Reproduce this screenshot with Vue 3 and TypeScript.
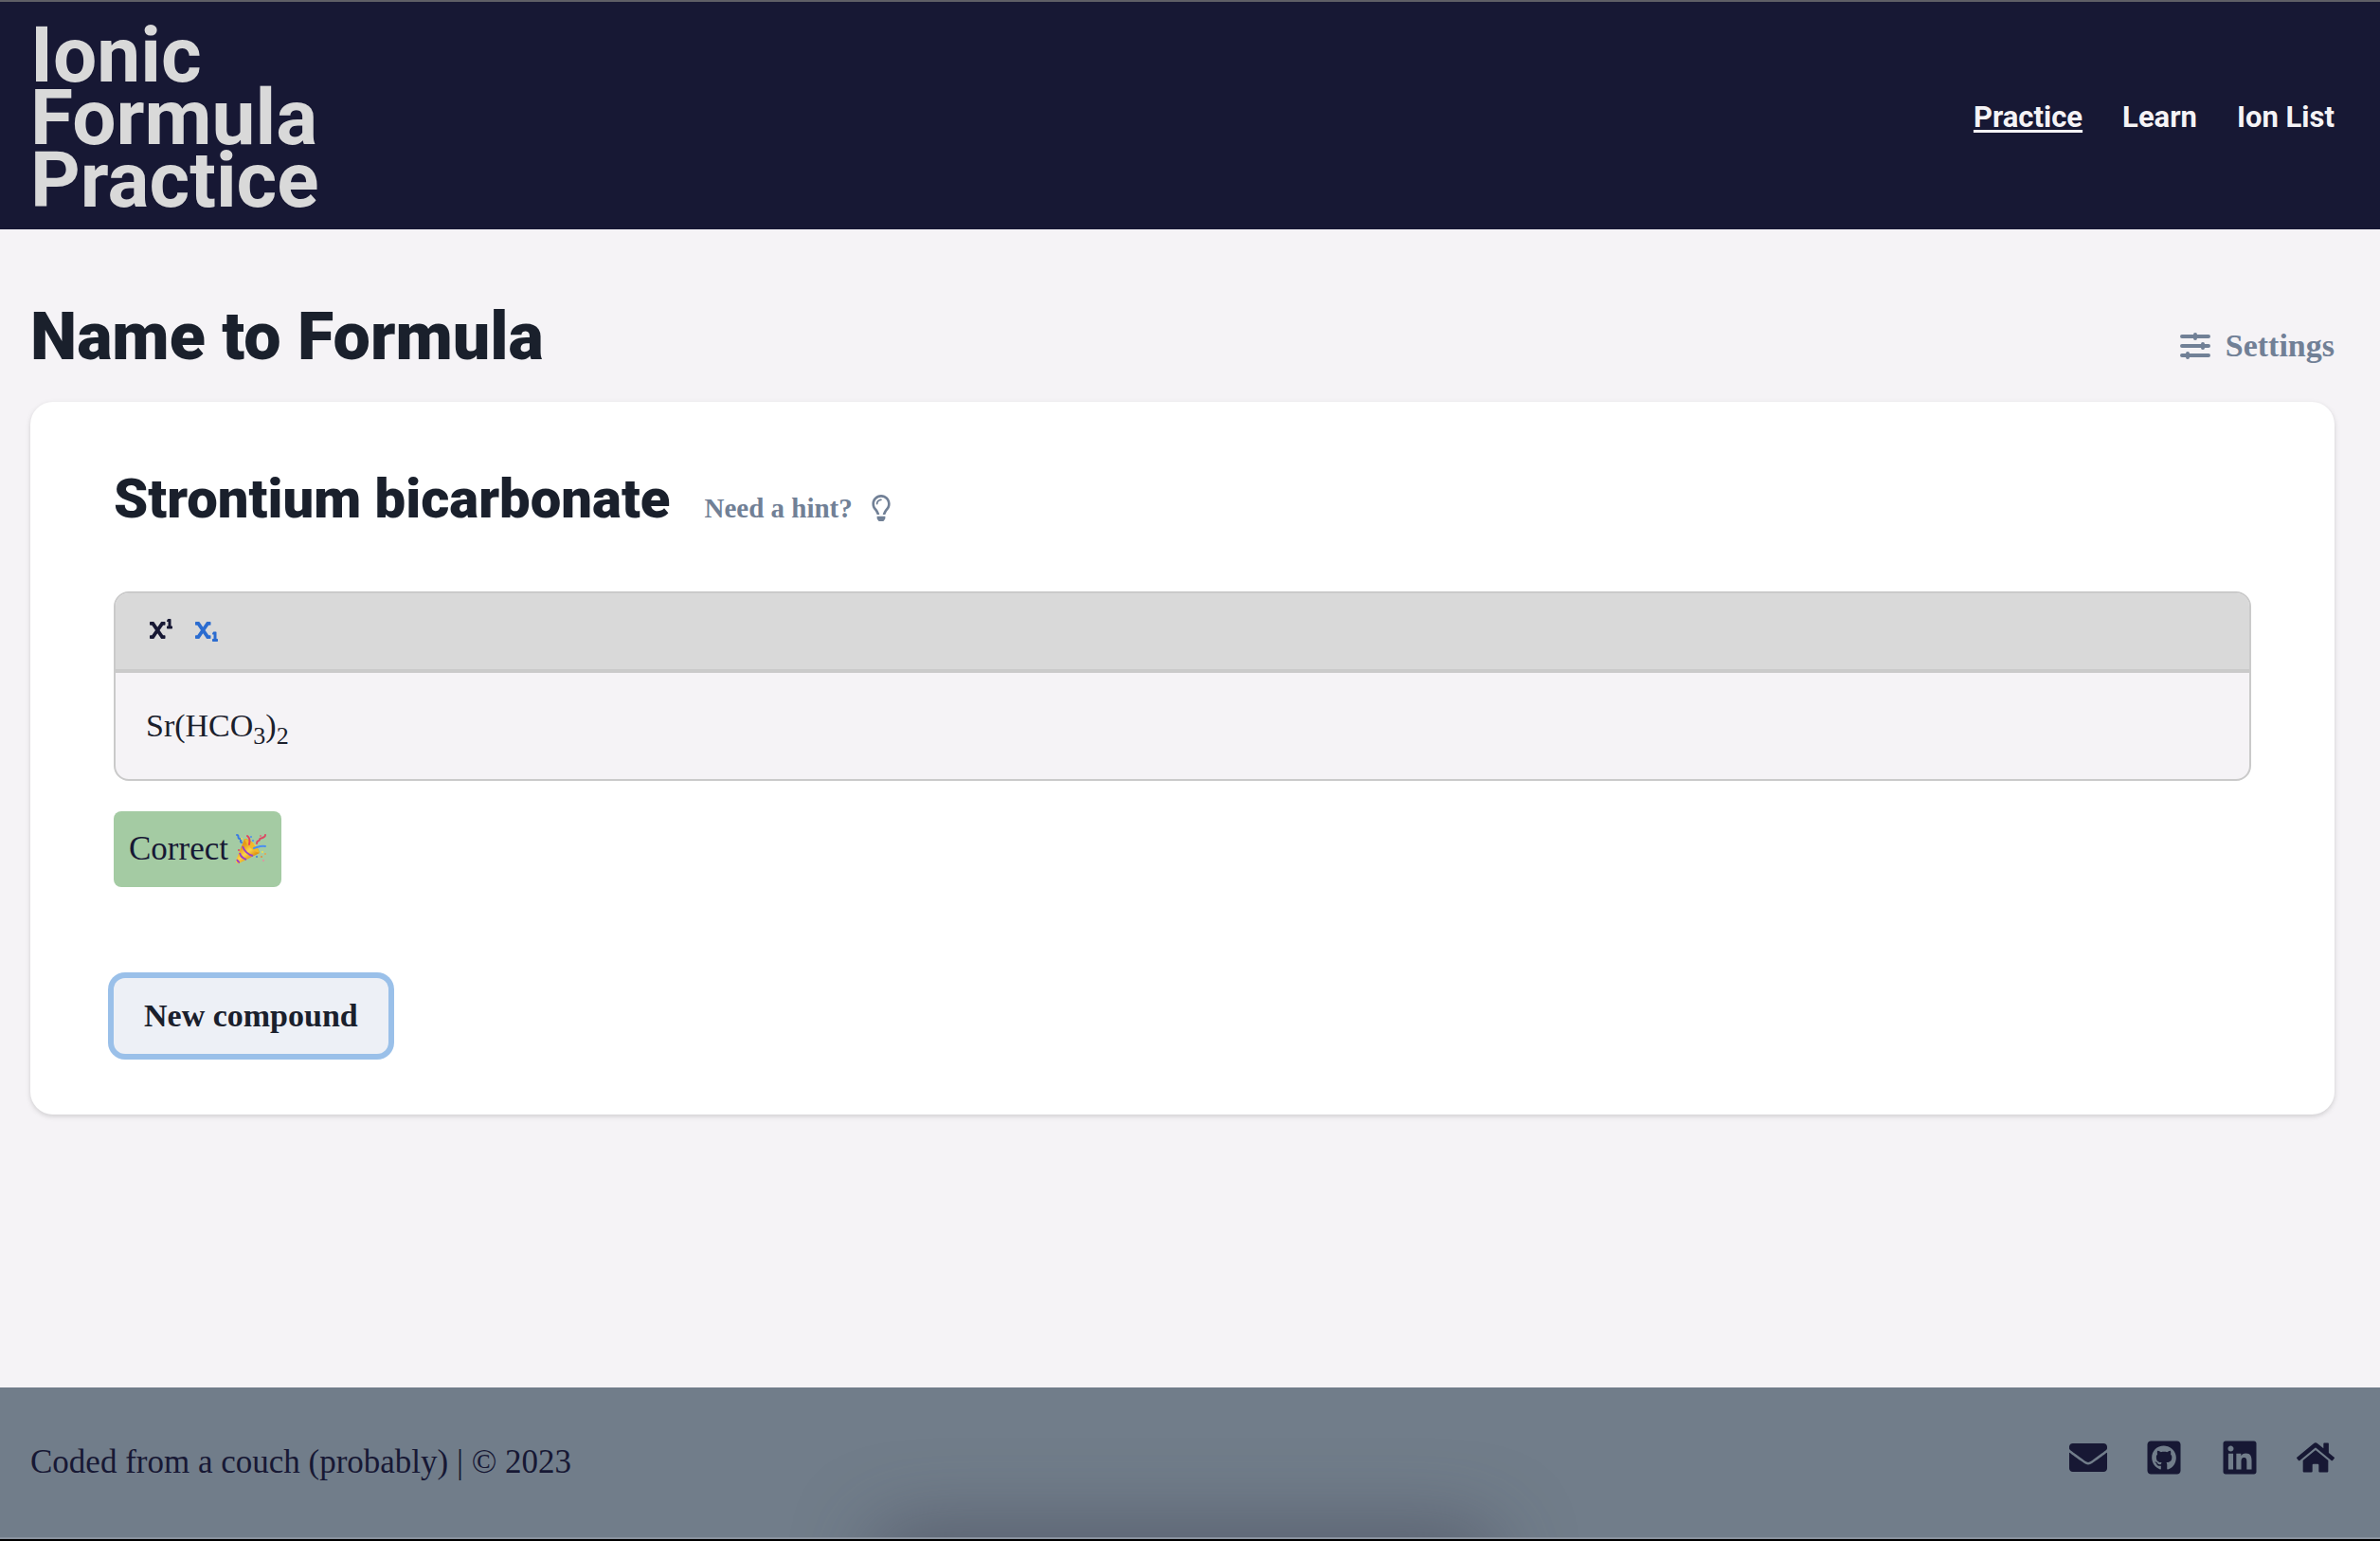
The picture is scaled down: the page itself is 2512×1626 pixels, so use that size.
<script setup lang="ts">
import { ref } from 'vue'

interface NavLink {
  label: string
  href: string
}

interface SocialLink {
  label: string
  href: string
  viewBox: string
  path: string
}

type Script = 'super' | 'sub'

const navLinks: NavLink[] = [
  { label: 'Practice', href: '#practice' },
  { label: 'Learn', href: '#learn' },
  { label: 'Ion List', href: '#ions' },
]
const currentPage = ref('Practice')
const activeScript = ref<Script>('sub')

const socialLinks: SocialLink[] = [
  {
    label: 'Email',
    href: '#email',
    viewBox: '0 0 512 512',
    path: 'M502.3 190.8c3.9-3.1 9.7-.2 9.7 4.7V400c0 26.5-21.5 48-48 48H48c-26.5 0-48-21.5-48-48V195.6c0-5 5.7-7.8 9.7-4.7 22.4 17.4 52.1 39.5 154.1 113.6 21.1 15.4 56.7 47.8 92.2 47.6 35.7.3 72-32.8 92.3-47.6 102-74.1 131.6-96.3 154-113.7zM256 320c23.2.4 56.6-29.2 73.4-41.4 132.7-96.3 142.8-104.7 173.4-128.7 5.8-4.5 9.2-11.5 9.2-18.9v-19c0-26.5-21.5-48-48-48H48c-26.5 0-48 21.5-48 48v19c0 7.4 3.4 14.3 9.2 18.9 30.6 23.9 40.7 32.4 173.4 128.7 16.8 12.2 50.2 41.8 73.4 41.4z',
  },
  {
    label: 'GitHub',
    href: '#github',
    viewBox: '0 0 448 512',
    path: 'M400 32H48C21.5 32 0 53.5 0 80v352c0 26.5 21.5 48 48 48h352c26.5 0 48-21.5 48-48V80c0-26.5-21.5-48-48-48zM277.3 415.7c-8.4 1.5-11.5-3.7-11.5-8 0-5.4.2-33 .2-55.3 0-15.6-5.2-25.5-11.3-30.7 37-4.1 76-9.2 76-73.1 0-18.2-6.5-27.3-17.1-39 1.7-4.3 7.4-22-1.7-45-13.9-4.3-45.7 17.9-45.7 17.9-13.2-3.7-27.5-5.6-41.6-5.6-14.1 0-28.4 1.9-41.6 5.6 0 0-31.8-22.2-45.7-17.9-9.1 22.9-3.5 40.6-1.7 45-10.6 11.7-15.6 20.8-15.6 39 0 63.6 37.3 69 74.3 73.1-4.8 4.3-9.1 11.7-10.6 22.3-9.5 4.3-33.8 11.7-48.3-13.9-9.1-15.8-25.5-17.1-25.5-17.1-16.2-.2-1.1 10.2-1.1 10.2 10.8 5 18.4 24.2 18.4 24.2 9.7 29.7 56.1 19.7 56.1 19.7 0 13.9.2 36.5.2 40.6 0 4.3-3 9.5-11.5 8-66-22.1-112.2-84.9-112.2-158.3 0-91.8 70.2-161.5 162-161.5S388 165.6 388 257.4c.1 73.4-44.7 136.3-110.7 158.3z',
  },
  {
    label: 'LinkedIn',
    href: '#linkedin',
    viewBox: '0 0 448 512',
    path: 'M416 32H31.9C14.3 32 0 46.5 0 64.3v383.4C0 465.5 14.3 480 31.9 480H416c17.6 0 32-14.5 32-32.3V64.3c0-17.8-14.4-32.3-32-32.3zM135.4 416H69V202.2h66.5V416zm-33.2-243c-21.3 0-38.5-17.3-38.5-38.5S80.9 96 102.2 96c21.2 0 38.5 17.3 38.5 38.5 0 21.3-17.2 38.5-38.5 38.5zm282.1 243h-66.4V312c0-24.8-.5-56.7-34.5-56.7-34.6 0-39.9 27-39.9 54.9V416h-66.4V202.2h63.7v29.2h.9c8.9-16.8 30.6-34.5 62.9-34.5 67.2 0 79.7 44.3 79.7 101.9V416z',
  },
  {
    label: 'Home',
    href: '#home',
    viewBox: '0 0 576 512',
    path: 'M280.37 148.26L96 300.11V464a16 16 0 0 0 16 16l112.06-.29a16 16 0 0 0 15.92-16V368a16 16 0 0 1 16-16h64a16 16 0 0 1 16 16v95.64a16 16 0 0 0 16 16.05L464 480a16 16 0 0 0 16-16V300L295.67 148.26a12.19 12.19 0 0 0-15.3 0zM571.6 251.47L488 182.56V44.05a12 12 0 0 0-12-12h-56a12 12 0 0 0-12 12v72.61L318.47 43a48 48 0 0 0-61 0L4.34 251.47a12 12 0 0 0-1.6 16.9l25.5 31A12 12 0 0 0 45.15 301l235.22-193.74a12.19 12.19 0 0 1 15.3 0L530.9 301a12 12 0 0 0 16.9-1.6l25.5-31a12 12 0 0 0-1.7-16.93z',
  },
]
</script>

<template>
  <div class="page">
    <header class="header">
      <a class="brand" href="#home">Ionic<br />Formula<br />Practice</a>
      <nav class="nav">
        <a
          v-for="link in navLinks"
          :key="link.label"
          :href="link.href"
          :class="{ current: link.label === currentPage }"
          @click="currentPage = link.label"
        >{{ link.label }}</a>
      </nav>
    </header>

    <main class="main">
      <div class="title-row">
        <h1>Name to Formula</h1>
        <button type="button" class="plain settings">
          <svg width="32" height="28" viewBox="0 0 32 28" fill="none" stroke="currentColor" stroke-width="4" stroke-linecap="round" aria-hidden="true">
            <path d="M2 4h28M2 14h28M2 24h28M16 2v4M24 12v4M8 22v4" />
          </svg>
          <span>Settings</span>
        </button>
      </div>

      <section class="card">
        <div class="question">
          <h2 id="compound">Strontium bicarbonate</h2>
          <button type="button" class="plain hint">
            <span>Need a hint?</span>
            <svg width="20" height="28" viewBox="0 0 352 512" fill="currentColor" aria-hidden="true">
              <path d="M176 80c-52.94 0-96 43.06-96 96 0 8.84 7.16 16 16 16s16-7.16 16-16c0-35.3 28.72-64 64-64 8.84 0 16-7.16 16-16s-7.16-16-16-16zM96.06 459.17c0 3.15.93 6.22 2.68 8.84l24.51 36.84c2.97 4.46 7.97 7.14 13.32 7.14h78.85c5.36 0 10.36-2.68 13.32-7.14l24.51-36.84c1.74-2.62 2.67-5.7 2.68-8.84l.05-43.18H96.02l.04 43.18zM176 0C73.72 0 0 82.97 0 176c0 44.37 16.45 84.85 43.56 115.78 16.64 18.99 42.74 58.8 52.42 92.16v.06h48v-.12c-.01-4.77-.72-9.51-2.15-14.07-5.59-17.81-22.82-64.71-62.17-109.17-20.54-23.43-31.52-53.15-31.61-84.14-.2-73.64 59.67-128 127.95-128 70.58 0 128 57.42 128 128 0 30.97-11.24 60.85-31.65 84.14-39.11 44.61-56.42 91.47-62.1 109.46a47.507 47.507 0 0 0-2.22 14.3v.1h48v-.05c9.68-33.37 35.78-73.18 52.42-92.16C335.55 260.85 352 220.37 352 176 352 78.8 273.2 0 176 0z" />
            </svg>
          </button>
        </div>

        <div class="editor">
          <div class="toolbar">
            <button type="button" aria-label="Superscript" :class="{ active: activeScript === 'super' }" @click="activeScript = 'super'">
              <svg width="24" height="24" viewBox="0 0 512 512" fill="currentColor" aria-hidden="true">
                <path d="M496 160h-16V16a16 16 0 0 0-16-16h-48a16 16 0 0 0-14.29 8.83l-16 32A16 16 0 0 0 400 64h16v96h-16a16 16 0 0 0-16 16v32a16 16 0 0 0 16 16h96a16 16 0 0 0 16-16v-32a16 16 0 0 0-16-16zM336 64h-67a16 16 0 0 0-13.14 6.87l-79.9 115-79.9-115A16 16 0 0 0 83 64H16A16 16 0 0 0 0 80v48a16 16 0 0 0 16 16h33.48l77.81 112-77.81 112H16a16 16 0 0 0-16 16v48a16 16 0 0 0 16 16h67a16 16 0 0 0 13.14-6.87l79.9-115 79.9 115A16 16 0 0 0 269 448h67a16 16 0 0 0 16-16v-48a16 16 0 0 0-16-16h-33.48l-77.81-112 77.81-112H336a16 16 0 0 0 16-16V80a16 16 0 0 0-16-16z" />
              </svg>
            </button>
            <button type="button" aria-label="Subscript" :class="{ active: activeScript === 'sub' }" @click="activeScript = 'sub'">
              <svg width="24" height="24" viewBox="0 0 512 512" fill="currentColor" aria-hidden="true">
                <path d="M496 448h-16V304a16 16 0 0 0-16-16h-48a16 16 0 0 0-14.29 8.83l-16 32A16 16 0 0 0 400 352h16v96h-16a16 16 0 0 0-16 16v32a16 16 0 0 0 16 16h96a16 16 0 0 0 16-16v-32a16 16 0 0 0-16-16zM336 64h-67a16 16 0 0 0-13.14 6.87l-79.9 115-79.9-115A16 16 0 0 0 83 64H16A16 16 0 0 0 0 80v48a16 16 0 0 0 16 16h33.48l77.81 112-77.81 112H16a16 16 0 0 0-16 16v48a16 16 0 0 0 16 16h67a16 16 0 0 0 13.14-6.87l79.9-115 79.9 115A16 16 0 0 0 269 448h67a16 16 0 0 0 16-16v-48a16 16 0 0 0-16-16h-33.48l-77.81-112 77.81-112H336a16 16 0 0 0 16-16V80a16 16 0 0 0-16-16z" />
              </svg>
            </button>
          </div>
          <div class="answer" role="textbox" contenteditable="true" spellcheck="false" aria-labelledby="compound">Sr(HCO<sub>3</sub>)<sub>2</sub></div>
        </div>

        <p class="result" role="status">
          <span>Correct</span>
          <svg width="32" height="32" viewBox="0 0 32 32" fill="none" stroke-linecap="round" aria-hidden="true">
            <defs>
              <linearGradient id="cone" x1="6" y1="14" x2="16" y2="26" gradientUnits="userSpaceOnUse">
                <stop offset="0" stop-color="#e79a17" />
                <stop offset="0.5" stop-color="#fbd54a" />
                <stop offset="1" stop-color="#e0900f" />
              </linearGradient>
            </defs>
            <path d="M9 5C14 4 24 13 25 20L3 31C1 32 0 30 0 28Z" fill="url(#cone)" />
            <path d="M7 13c2 5 6 9 11 10M4 20c1 4 4 6 7 7M1 27c1 2 2 3 3 3" stroke="#9a3fc9" stroke-width="2" stroke-linecap="butt" />
            <path d="M9 5c6 1 13 8 16 15-6-1-14-8-16-15Z" fill="#f0b92c" />
            <path d="M14 11c1-4 1-7-2-9" stroke="#e5405e" stroke-width="2" />
            <path d="M19 15c4-1 7-3 12-2" stroke="#4b8ff0" stroke-width="2" />
            <path d="M1 1c3 0 0 4 3 4s-1 3 2 4" stroke="#3a7be0" stroke-width="2" />
            <path d="M31 1c0 3-2 2-3 3s-3 0-3 2-3 0-3 4" stroke="#dd4763" stroke-width="2" />
            <g>
              <circle cx="16" cy="3" r="1" fill="#4b8ff0" />
              <circle cx="6" cy="5" r="1" fill="#f5e547" />
              <circle cx="3" cy="17" r="1" fill="#dd4763" />
              <circle cx="18" cy="7" r="1" fill="#4b8ff0" />
              <circle cx="26" cy="2" r="1" fill="#dd6a7c" />
              <circle cx="22" cy="24" r="1" fill="#3a7be0" />
              <circle cx="28" cy="19" r="1" fill="#f5e547" />
              <circle cx="31" cy="21" r="1" fill="#eba24a" />
              <circle cx="27" cy="24" r="1" fill="#e58b3a" />
              <circle cx="29" cy="28" r="1" fill="#e98ba0" />
            </g>
          </svg>
        </p>

        <button type="button" class="next">New compound</button>
      </section>
    </main>

    <footer class="footer">
      <p>Coded from a couch (probably) | © 2023</p>
      <ul>
        <li v-for="link in socialLinks" :key="link.label">
          <a :href="link.href" :aria-label="link.label">
            <svg width="40" height="40" :viewBox="link.viewBox" fill="currentColor" aria-hidden="true">
              <path :d="link.path" />
            </svg>
          </a>
        </li>
      </ul>
    </footer>
  </div>
</template>

<style>
body {
  margin: 0;
  background: #f5f3f6;
}
</style>

<style scoped>
.page {
  box-sizing: border-box;
  display: flex;
  flex-direction: column;
  min-height: 100vh;
  border-top: 2px solid #5f5f66;
  border-bottom: 2px solid #000000;
  background: #f5f3f6;
  color: #1a202c;
  font-family: 'Liberation Serif', 'Times New Roman', serif;
  font-size: 35px;
  line-height: 48px;
}

.header {
  display: flex;
  align-items: center;
  justify-content: space-between;
  padding: 23px 48px 19px 32px;
  background: #171834;
  font-family: Roboto, sans-serif;
  font-weight: 700;
}

.brand {
  color: #d9d9d9;
  font-size: 82px;
  line-height: 66px;
  text-decoration: none;
}

.nav {
  display: flex;
  gap: 42px;
  font-size: 31px;
}

.nav a {
  color: #f5f3f6;
  text-decoration: none;
}

.nav a.current {
  text-decoration: underline;
  text-decoration-thickness: 3px;
  text-underline-offset: 3px;
  text-decoration-skip-ink: none;
}

.main {
  flex: 1;
  padding: 66px 48px 64px 32px;
}

.title-row {
  display: flex;
  align-items: baseline;
  justify-content: space-between;
  margin-bottom: 22px;
}

h1,
h2 {
  margin: 0;
  font-family: Roboto, sans-serif;
  font-weight: 900;
}

h1 {
  font-size: 70px;
  line-height: 94px;
}

h2 {
  font-size: 58px;
  line-height: 72px;
}

.plain {
  display: flex;
  align-items: center;
  padding: 0;
  border: 0;
  background: none;
  color: #718096;
  font: inherit;
  font-weight: 700;
}

.settings {
  gap: 16px;
  font-size: 34px;
}

.hint {
  gap: 20px;
  font-size: 29px;
}

.card {
  padding: 66px 88px 64px;
  border-radius: 24px;
  background: #ffffff;
  box-shadow: 0 2px 6px rgba(0, 0, 0, 0.1), 0 2px 4px rgba(0, 0, 0, 0.06);
}

.question {
  display: flex;
  align-items: baseline;
  gap: 36px;
  margin-bottom: 62px;
}

.editor {
  overflow: hidden;
  border: 2px solid #cacaca;
  border-radius: 16px;
  background: #f5f3f6;
}

.toolbar {
  display: flex;
  gap: 24px;
  padding: 27px 36px 29px;
  border-bottom: 4px solid #cacaca;
  background: #d9d9d9;
}

.toolbar button {
  display: flex;
  padding: 0;
  border: 0;
  background: none;
  color: #171834;
}

.toolbar button.active {
  color: #2b6cd0;
}

.answer {
  padding: 32px;
  outline: none;
  font-size: 34px;
}

.answer sub {
  font-size: 26px;
  line-height: 0;
}

.result {
  display: flex;
  align-items: center;
  gap: 8px;
  width: fit-content;
  margin: 32px 0 96px;
  padding: 16px;
  border-radius: 8px;
  background: #a4cba3;
  color: #171834;
}

.next {
  display: block;
  padding: 16px 32px;
  border: 0;
  border-radius: 12px;
  background: #edf0f6;
  box-shadow: 0 0 0 6px #9ac0e9;
  color: #1a202c;
  font: inherit;
  font-size: 34px;
  font-weight: 700;
}

.footer {
  position: relative;
  display: flex;
  align-items: flex-start;
  justify-content: space-between;
  overflow: hidden;
  padding: 54px 48px 54px 32px;
  border-bottom: 2px solid #8a929e;
  background: #717d8a;
  color: #171834;
}

/* Soft shade along the lower edge */
.footer::after {
  content: '';
  position: absolute;
  top: 100%;
  left: 50%;
  width: 640px;
  height: 60px;
  margin-left: -326px;
  border-radius: 30px;
  box-shadow: 0 0 80px 10px rgba(60, 62, 80, 0.5);
}

.footer p {
  margin: 0;
  line-height: 50px;
}

.footer ul {
  display: flex;
  gap: 40px;
  margin: 0;
  padding: 0;
  list-style: none;
}

.footer a {
  display: flex;
  color: inherit;
}
</style>
